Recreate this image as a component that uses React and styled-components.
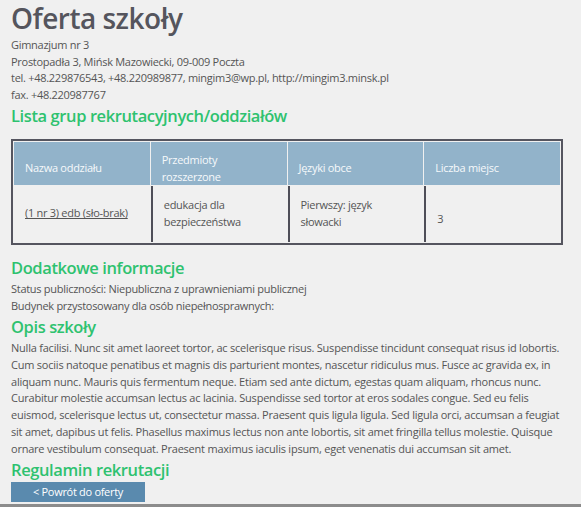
import React from "react";
import styled, { createGlobalStyle } from "styled-components";

const GlobalStyle = createGlobalStyle`
  html, body {
    margin: 0;
    padding: 0;
    background: #f0f0f0;
  }
  body {
    font-family: "Open Sans", "DejaVu Sans", sans-serif;
    color: #555;
  }
`;

const Page = styled.main`
  padding: 1px 18px 0 11px;
  font-size: 11px;
  line-height: 16.5px;
  letter-spacing: -0.28px;
`;

const Title = styled.h1`
  margin: 0;
  font-size: 28px;
  line-height: 34px;
  font-weight: 600;
  letter-spacing: -0.5px;
  color: #55555d;
`;

const Info = styled.div`
  margin-top: 2px;
`;

const Line = styled.div``;

const SectionTitle = styled.h2`
  margin: ${({ $top }) => $top ?? 2}px 0 ${({ $bottom }) => $bottom ?? 2}px;
  font-size: 16.5px;
  line-height: 22px;
  font-weight: 600;
  letter-spacing: -0.4px;
  color: #2ec26f;
`;

const TableFrame = styled.div`
  margin-top: 12px;
  border: 2px solid #55555f;
`;

const Table = styled.table`
  width: 100%;
  table-layout: fixed;
  border-collapse: separate;
  border-spacing: 1px;
  th {
    background: #92b3ca;
    color: #f6f9fb;
    font-weight: 400;
    text-align: left;
    vertical-align: middle;
    padding: 10px 11px 0;
    line-height: 16.5px;
  }
  td {
    padding: 11px 11px 12px;
    vertical-align: middle;
    line-height: 16.5px;
  }
  td + td {
    border-left: 2px solid #4e4e58;
  }
`;

const Cell = styled.td`
  && {
    padding-top: ${({ $lower }) => ($lower ? 22 : 11)}px;
  }
`;

const GroupLink = styled.a`
  color: #555;
  text-decoration: underline;
`;

const Paragraph = styled.p`
  margin: 0;
  line-height: 16.8px;
  letter-spacing: -0.22px;
`;

const BackButton = styled.button`
  display: block;
  margin-top: 1px;
  width: 134px;
  height: 20px;
  border: none;
  background: #5a8aae;
  color: #fff;
  font-family: inherit;
  font-size: 11px;
  letter-spacing: -0.3px;
  padding: 0;
  cursor: pointer;
`;

const Footer = styled.div`
  margin-top: 2px;
  border-top: 3px solid #8c8c8c;
`;

const App = () => {
  return (
    <>
      <GlobalStyle />
      <Page>
        <Title>Oferta szkoły</Title>
        <Info>
          <Line>Gimnazjum nr 3</Line>
          <Line>Prostopadła 3, Mińsk Mazowiecki, 09-009 Poczta</Line>
          <Line>
            tel. +48.229876543, +48.220989877, mingim3@wp.pl,
            http://mingim3.minsk.pl
          </Line>
          <Line>fax. +48.220987767</Line>
        </Info>

        <SectionTitle>Lista grup rekrutacyjnych/oddziałów</SectionTitle>
        <TableFrame>
          <Table>
            <thead>
              <tr>
                <th>Nazwa oddziału</th>
                <th>Przedmioty rozszerzone</th>
                <th>Języki obce</th>
                <th>Liczba miejsc</th>
              </tr>
            </thead>
            <tbody>
              <tr>
                <Cell>
                  <GroupLink href="#">(1 nr 3) edb (sło-brak)</GroupLink>
                </Cell>
                <Cell>edukacja dla bezpieczeństwa</Cell>
                <Cell>Pierwszy: język słowacki</Cell>
                <Cell $lower>3</Cell>
              </tr>
            </tbody>
          </Table>
        </TableFrame>

        <SectionTitle $top={12}>Dodatkowe informacje</SectionTitle>
        <Line>Status publiczności: Niepubliczna z uprawnieniami publicznej</Line>
        <Line>Budynek przystosowany dla osób niepełnosprawnych:</Line>

        <SectionTitle>Opis szkoły</SectionTitle>
        <Paragraph>
          Nulla facilisi. Nunc sit amet laoreet tortor, ac scelerisque risus.
          Suspendisse tincidunt consequat risus id lobortis. Cum sociis natoque
          penatibus et magnis dis parturient montes, nascetur ridiculus mus.
          Fusce ac gravida ex, in aliquam nunc. Mauris quis fermentum neque.
          Etiam sed ante dictum, egestas quam aliquam, rhoncus nunc. Curabitur
          molestie accumsan lectus ac lacinia. Suspendisse sed tortor at eros
          sodales congue. Sed eu felis euismod, scelerisque lectus ut,
          consectetur massa. Praesent quis ligula ligula. Sed ligula orci,
          accumsan a feugiat sit amet, dapibus ut felis. Phasellus maximus
          lectus non ante lobortis, sit amet fringilla tellus molestie. Quisque
          ornare vestibulum consequat. Praesent maximus iaculis ipsum, eget
          venenatis dui accumsan sit amet.
        </Paragraph>

        <SectionTitle $top={1} $bottom={0}>
          Regulamin rekrutacji
        </SectionTitle>
        <BackButton type="button">&lt; Powrót do oferty</BackButton>
      </Page>
      <Footer />
    </>
  );
};

export default App;
